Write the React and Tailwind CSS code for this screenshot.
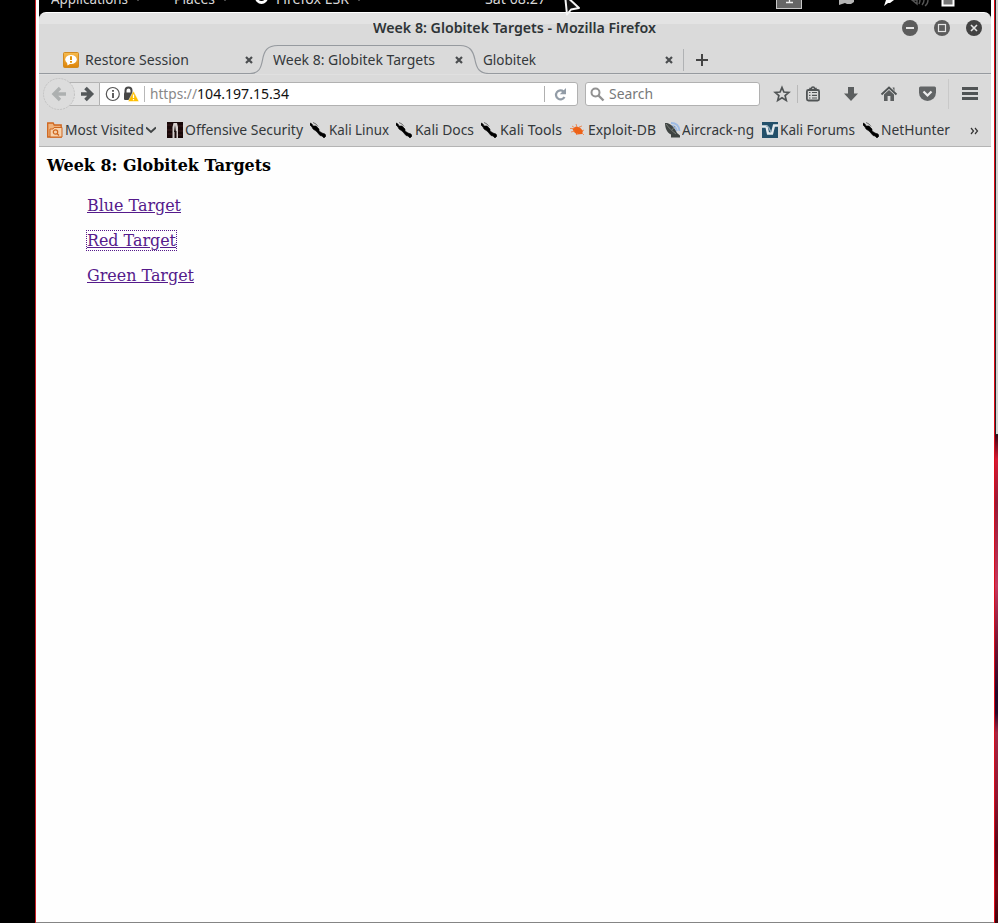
import { useLayoutEffect, useRef } from "react";

// One line of text, condensed or widened horizontally to a given width.
function Fit({ w, className = "", textClass = "", children }) {
  const ref = useRef(null);
  useLayoutEffect(() => {
    const el = ref.current;
    el.style.transform = "none";
    const natural = el.getBoundingClientRect().width;
    el.style.transform = `scaleX(${w / natural})`;
  }, [w]);
  return (
    <span className={`block shrink-0 whitespace-nowrap ${className}`} style={{ width: w }}>
      <span ref={ref} className={`inline-block origin-left ${textClass}`}>{children}</span>
    </span>
  );
}

function Caret() {
  return (
    <svg className="ml-[6px] shrink-0" width="8" height="12" viewBox="0 0 8 12">
      <path d="M1 -3h6l-3 4z" fill="#bbb" />
    </svg>
  );
}

function TopBar() {
  return (
    <div className="relative flex h-3 w-full overflow-hidden bg-black text-[13.5px] leading-[18px] text-[#d8d8d8]">
      <div className="-mt-[10px] ml-3 flex h-[18px] items-start">
        <Fit w={77}>Applications</Fit>
        <span className="mt-[10px]"><Caret /></span>
        <span className="ml-8"><Fit w={41}>Places</Fit></span>
        <span className="mt-[10px]"><Caret /></span>
        <span className="ml-[26px] mt-[1px] h-[13px] w-[13px] rounded-full border-[3px] border-white bg-black" />
        <span className="ml-[8px]"><Fit w={73}>Firefox ESR</Fit></span>
        <span className="mt-[10px]"><Caret /></span>
        <span className="ml-[122px]"><Fit w={61}>Sat 08:27</Fit></span>
      </div>
      <svg className="ml-auto mr-[27px] shrink-0" width="188" height="12" viewBox="776 0 188 12">
        <rect x="776.5" y="-6" width="25" height="14.5" fill="#666" stroke="#c8c8c8" />
        <path d="M786 2.5h7M789.5 -4v6" stroke="#eee" strokeWidth="1.3" />
        <path d="M839 0h15v2l-3 2h-4l-2-1-3 1-3 1z" fill="#b5b5b5" />
        <path d="M894 0l-4 3-2 0-4 3 2-6z" fill="#fff" />
        <path d="M912 0h5v4zM920 0q0 2-1 4M924 0q0 3-2 5M928 0q0 4-3 6" fill="none" stroke="#555" strokeWidth="1.4" />
        <rect x="942.5" y="-5" width="11" height="10.5" fill="#777" stroke="#fff" strokeWidth="2" />
        <path d="M968 0h6l-3 2z" fill="#aaa" />
      </svg>
    </div>
  );
}

function TitleBar() {
  return (
    <div className="flex h-8 items-center rounded-t-[7px] border-t border-white bg-[linear-gradient(#e3e3e3_0_11px,#dadada_11px)] pb-[2px] pl-[334px] pr-[9px]">
      <Fit w={283} className="text-[14px] font-semibold leading-5 text-[#2e3436]">Week 8: Globitek Targets - Mozilla Firefox</Fit>
      <svg className="ml-auto" width="80" height="16" viewBox="0 0 80 16">
        <circle cx="8" cy="8" r="8" fill="#5c5c5c" />
        <path d="M4 8h8" stroke="#e5e5e5" strokeWidth="2" />
        <circle cx="40" cy="8" r="8" fill="#5c5c5c" />
        <rect x="36.5" y="4.5" width="7" height="7" fill="none" stroke="#e5e5e5" strokeWidth="1.2" />
        <circle cx="72" cy="8" r="8" fill="#434343" />
        <path d="M69 5l6 6m0-6l-6 6" stroke="#e5e5e5" strokeWidth="1.6" />
      </svg>
    </div>
  );
}

function TabClose() {
  return (
    <svg width="8" height="8" viewBox="0 0 8 8" className="shrink-0">
      <path d="M1 1l6 6M7 1l-6 6" stroke="#4b4e50" strokeWidth="2.2" />
    </svg>
  );
}

function Tabs() {
  return (
    <div className="relative h-[30px] text-[14.5px] leading-5 text-[#34383a]">
      <svg className="absolute inset-0" width="952" height="30" viewBox="39 44 952 30" fill="none">
        <path d="M39 73.5H250C259 73.5 261 68 262.500 60C264 51 267 45.500 278 45.500H460C470 45.500 473 51 474.800 59C476.500 68 479 73.5 489 73.5H991" stroke="#969a9f" strokeWidth="1.2" />
        <path d="M683.5 49v22" stroke="#b0b2b4" />
      </svg>
      <div className="relative flex h-[30px] items-center pl-6 pt-[2px]">
        <svg width="16" height="16" viewBox="0 0 16 16" className="shrink-0">
          <defs>
            <linearGradient id="session" x2="0" y2="1">
              <stop stopColor="#f7bc50" />
              <stop offset="1" stopColor="#dd8408" />
            </linearGradient>
          </defs>
          <rect x=".5" y=".5" width="15" height="15" rx="1" fill="url(#session)" stroke="#d18a20" />
          <ellipse cx="8" cy="7.500" rx="5.800" ry="4.500" fill="#fff" />
          <path d="M4 10l.5 3.500 4-2.500z" fill="#fff" />
          <path d="M8 4.200v3.800M8 9v1.700" stroke="#e09000" strokeWidth="1.900" />
        </svg>
        <Fit w={104} className="ml-[6px] pb-[2px]">Restore Session</Fit>
        <span className="ml-[56px]"><TabClose /></span>
        <Fit w={162} className="ml-[20px] pb-[2px]">Week 8: Globitek Targets</Fit>
        <span className="ml-[20px]"><TabClose /></span>
        <Fit w={53} className="ml-[20px] pb-[2px]">Globitek</Fit>
        <span className="ml-[129px]"><TabClose /></span>
        <svg className="ml-[23px]" width="12" height="12" viewBox="0 0 12 12"><path d="M0 6h12M6 0v12" stroke="#444" strokeWidth="2" /></svg>
      </div>
    </div>
  );
}

function NavBar() {
  return (
    <div className="flex h-[39px] border-t border-[#e0e0e0] text-[14px] leading-5">
      <svg className="ml-1 shrink-0" width="56" height="38" viewBox="43 75 56 38">
        <rect x="66" y="82" width="34" height="24" fill="#e3e3e3" />
        <path d="M66 82.500h33M66 105.500h33" stroke="#b3b3b3" />
        <circle cx="59" cy="94" r="15.500" fill="#dcdcdc" stroke="#c3c3c3" strokeDasharray="2 1" />
        <path d="M66 94H55M60 88l-6 6 6 6" fill="none" stroke="#adb0b0" strokeWidth="3.400" />
        <path d="M81 94h9M85.500 88l6 6-6 6" fill="none" stroke="#54585a" strokeWidth="3.600" />
      </svg>
      <div className="mt-[7px] flex h-[24px] w-[479px] shrink-0 items-center rounded-r-[3px] border border-[#b1b1b1] bg-white">
        <svg className="ml-[5px] shrink-0" width="46" height="22" viewBox="105 83 46 22">
          <circle cx="112.800" cy="94" r="6.500" fill="none" stroke="#555" strokeWidth="1.200" />
          <path d="M113 93v5M113 90v1.800" stroke="#444" strokeWidth="1.700" />
          <path d="M125.500 93v-2.500a3 3 0 0 1 6 0V93" fill="none" stroke="#474747" strokeWidth="2" />
          <rect x="124" y="92.500" width="9" height="7.500" rx="1" fill="#474747" />
          <path d="M133.500 91l5.500 10.500h-11z" fill="#ffbf00" stroke="#fff" strokeWidth=".5" />
          <path d="M133.500 94.500v3.500M133.500 99v1.300" stroke="#fff" strokeWidth="1.300" />
          <path d="M144.500 86v16" stroke="#b8b8b8" />
        </svg>
        <Fit w={47} className="-ml-[1px] text-[#888]">https://</Fit>
        <Fit w={92} className="text-[#111]">104.197.15.34</Fit>
        <svg className="ml-auto mr-2" width="26" height="22" viewBox="543 83 26 22" fill="none">
          <path d="M544.500 86v16" stroke="#b0b0b0" />
          <path d="M563.500 91.500a4.500 4.500 0 1 0 1 5.500" stroke="#929ca7" strokeWidth="2.200" />
          <path d="M566 88v6.200h-6.200z" fill="#929ca7" />
        </svg>
      </div>
      <div className="ml-[7px] mt-[7px] flex h-[24px] w-[175px] shrink-0 items-center rounded-[3px] border border-[#b1b1b1] bg-white text-[#77797a]">
        <svg className="ml-1" width="15" height="15" viewBox="0 0 15 15" fill="none" stroke="#929292">
          <circle cx="5.500" cy="5.500" r="4" strokeWidth="2" />
          <path d="M8.500 8.500l5 5" strokeWidth="2.400" />
        </svg>
        <Fit w={44} className="ml-[4px]">Search</Fit>
      </div>
      <svg className="shrink-0" width="231" height="38" viewBox="760 75 231 38" fill="none" stroke="#505455">
        <path d="M782 87.500l1.900 4.500 4.900.400-3.700 3.200 1.200 4.800-4.300-2.600-4.300 2.600 1.200-4.800-3.700-3.200 4.900-.400z" strokeWidth="1.700" />
        <path d="M797.500 85v18" stroke="#b9b9b9" />
        <path d="M948.500 79v30" stroke="#c9c9c9" />
        <rect x="806.900" y="90" width="12.200" height="10.500" rx="1.500" strokeWidth="1.800" />
        <path d="M810 90v-1.500h1.500a1.500 1.500 0 0 1 3 0h1.500V90" strokeWidth="1.500" />
        <path d="M809 92.500h1.500M812 92.500h5M809 95.300h1.500M812 95.300h5M809 98h1.500M812 98h5" strokeWidth="1.200" />
        <path d="M848 87h6v6.500h4L851 101l-7-7.500h4z" fill="#5b5e5f" stroke="none" />
        <path d="M881.500 94.500l7.500-7 7.500 7" strokeWidth="1.900" />
        <path d="M884 94.500l5-4.500 5 4.500v6.500h-3.600v-5h-2.800v5H884zM892.500 87.500h2v4z" fill="#5b5e5f" stroke="none" />
        <path d="M920.500 86.500h14a1.500 1.500 0 0 1 1.500 1.500v4.500a8.500 8.500 0 0 1-17 0v-4.500a1.500 1.500 0 0 1 1.500-1.500z" fill="#626566" stroke="none" />
        <path d="M923.500 91.500l4 4 4-4" stroke="#eee" strokeWidth="2.200" />
        <path d="M962 88.500h16M962 93.500h16M962 98.500h16" strokeWidth="2.800" />
      </svg>
    </div>
  );
}

function KaliIcon() {
  return (
    <svg width="16" height="16" viewBox="0 0 16 16" className="shrink-0">
      <path d="M0 1l2 1 1 2 3 0 1 1 2 2v2l3 2 3 1 1 2-2 2-2-2-2-.5-3-3.500-1-1-3-2-1-2-2-2z" fill="#000" stroke="#000" strokeWidth=".6" />
      <path d="M3 .5l3 1.500 2 2.500" fill="none" stroke="#444" strokeWidth=".7" />
    </svg>
  );
}

function FolderIcon() {
  return (
    <svg width="16" height="16" viewBox="0 0 16 16" className="shrink-0" fill="none" stroke="#cf661e">
      <path d="M.7 15v-14h5.500l1 2h7v12z" fill="#efb27c" strokeWidth="1.300" />
      <path d="M3 15v-8h3l1-1.500h8v9.500z" fill="#f7d2ac" />
      <circle cx="8.500" cy="10" r="2.200" strokeWidth="1.200" />
      <path d="M10 11.500l2 2" strokeWidth="1.300" />
    </svg>
  );
}

function OffsecIcon() {
  return (
    <svg width="16" height="16" viewBox="0 0 16 16" className="shrink-0">
      <path d="M0 0h16v16H0z" fill="#180808" />
      <path d="M0 3h5M11 4h5M0 8h5M11 9h5M1 12h4M11 13h4" stroke="#3a1a1c" />
      <path d="M6.500 1h3.500l1 4v11H9.500V9H7.500v7H5.500V5z" fill="#d5cfcd" />
      <path d="M8 3l1 7H7z" fill="#18110f" />
    </svg>
  );
}

function ExploitIcon() {
  return (
    <svg width="16" height="16" viewBox="0 0 16 16" className="shrink-0">
      <path d="M2.500 7l3.500-2.500 4 1 3 3.500-1 3-5 .5-3-2.500z" fill="#ed6218" />
      <path d="M0 6.500h4M2 4l3 2M6 2l1 3M9 5l3-1M1 10l4-1M6 13l2-2M12 11l2 2M12 9l2-1" stroke="#ed7a3e" strokeWidth=".8" />
    </svg>
  );
}

function AircrackIcon() {
  return (
    <svg width="16" height="16" viewBox="0 0 16 16" className="shrink-0" fill="none">
      <path d="M6 1q8 0 8.500 8M6.500 4q4.500 0 5.500 5" stroke="#9dbbe4" strokeWidth="1.800" />
      <path d="M0 1h2c4 1 8 5 10 10l3 2.500V15.500H6v-3C2 11 0 6 0 1z" fill="#3f4442" />
      <path d="M1 2c3 4 6 7 10 10M7 8l3-4" stroke="#868b87" strokeWidth=".8" />
    </svg>
  );
}

function ForumsIcon() {
  return (
    <svg width="16" height="16" viewBox="0 0 16 16" className="shrink-0">
      <path d="M0 0h16v16H0z" fill="#23506a" />
      <path d="M0 4.500h4.500l1.500 7h4l2-8h4" fill="none" stroke="#e4eaee" strokeWidth="2.400" />
      <path d="M4 4l2.500 1 2.500 5" fill="none" stroke="#9ab1be" strokeWidth="1.300" />
    </svg>
  );
}

const bookmarks = [
  { label: "Most Visited", w: 79, gap: 0, pad: 2, Icon: FolderIcon, menu: true },
  { label: "Offensive Security", w: 118, gap: 11, pad: 2, Icon: OffsecIcon },
  { label: "Kali Linux", w: 60, gap: 7, pad: 3, Icon: KaliIcon },
  { label: "Kali Docs", w: 59, gap: 7, pad: 3, Icon: KaliIcon },
  { label: "Kali Tools", w: 62, gap: 7, pad: 3, Icon: KaliIcon },
  { label: "Exploit-DB", w: 68, gap: 8, pad: 2, Icon: ExploitIcon },
  { label: "Aircrack-ng", w: 72, gap: 9, pad: 1, Icon: AircrackIcon },
  { label: "Kali Forums", w: 75, gap: 8, pad: 2, Icon: ForumsIcon },
  { label: "NetHunter", w: 69, gap: 8, pad: 2, Icon: KaliIcon },
];

function Bookmarks() {
  return (
    <div className="flex h-[34px] items-center border-b border-[#b4b4b4] pl-2 text-[14.5px] leading-5 text-[#34383a]">
      {bookmarks.map(({ label, w, gap, pad, Icon, menu }) => (
        <div key={label} className="flex shrink-0 items-center" style={{ marginLeft: gap }}>
          <Icon />
          <span style={{ marginLeft: pad }}><Fit w={w} className="pb-[2px]">{label}</Fit></span>
          {menu && (
            <svg className="ml-[2px]" width="10" height="8" viewBox="0 0 10 8"><path d="M0 1.500l5 4.500L10 1.500" fill="none" stroke="#404445" strokeWidth="2" /></svg>
          )}
        </div>
      ))}
      <svg className="ml-auto mr-3 mt-[2px]" width="9" height="8" viewBox="0 0 9 8"><path d="M1 1l2.500 3-2.500 3M5 1l2.500 3-2.500 3" fill="none" stroke="#333" strokeWidth="1.200" /></svg>
    </div>
  );
}

function Page() {
  return (
    <div className="h-[775px] bg-[#fefefe] pl-2 pt-[9px] font-['DejaVu_Serif',serif] text-[16px] leading-[19px] text-black">
      <h1 className="text-[16px] font-bold"><Fit w={224}>Week 8: Globitek Targets</Fit></h1>
      <div className="ml-10 mt-[21px] flex flex-col items-start gap-4 text-[#551a8b]">
        <a><Fit w={94} textClass="underline">Blue Target</Fit></a>
        <a className="outline outline-1 outline-dotted outline-[#551a8b]"><Fit w={89} textClass="underline">Red Target</Fit></a>
        <a><Fit w={107} textClass="underline">Green Target</Fit></a>
      </div>
    </div>
  );
}

export default function App() {
  return (
    <div className="relative flex h-[923px] w-[998px] overflow-hidden bg-black font-['Noto_Sans',sans-serif]">
      <div className="w-[35px] shrink-0 bg-black" />
      <div className="w-px shrink-0 bg-[#c92028]" />
      <div className="flex h-[923px] w-[958px] shrink-0 flex-col border-b border-[#858585] bg-white">
        <div className="mx-[3px] w-[952px] bg-[#dadada]">
          <div className="bg-black">
            <TopBar />
            <TitleBar />
          </div>
          <Tabs />
          <NavBar />
          <Bookmarks />
          <Page />
        </div>
      </div>
      <div className="w-px shrink-0 bg-[#e30b18]" />
      <div className="flex w-[3px] shrink-0 flex-col">
        <div className="h-[435px] border-b border-l border-[#222] bg-[#d4d4d4]" />
        <div className="flex-1 bg-[linear-gradient(#3a0715_0%,#d41b35_5%,#921b38_14%,#c4395f_31%,#711331_43%,#21082a_53%,#28082a_57%,#a22845_61%,#8e1631_74%,#560718_84%,#790613_93%,#3c050d_100%)]" />
      </div>
      <svg className="absolute left-[562px] top-0" width="22" height="18" viewBox="562 0 22 18">
        <path d="M565 -5l2 19.500 4-5 8-1.500-14-13z" fill="#111" stroke="#f5f5f5" strokeWidth="2" strokeLinejoin="round" />
      </svg>
    </div>
  );
}
